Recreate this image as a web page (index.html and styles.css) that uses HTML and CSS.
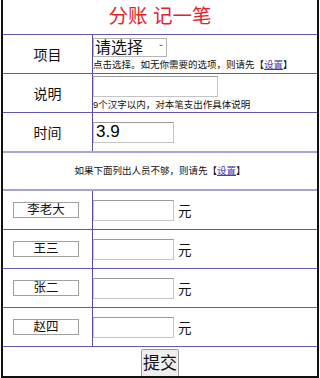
FILE: index.html
```html
<!DOCTYPE html>
<html lang="zh-CN">
<head>
  <meta charset="UTF-8">
  <meta name="viewport" content="width=device-width, initial-scale=1">
  <title>分账 记一笔</title>
  <link rel="stylesheet" href="styles.css">
</head>
<body>
  <form class="page">
    <h1 class="title">分账 记一笔</h1>

    <div class="row">
      <div class="label">项目</div>
      <div class="field">
        <span class="pick-wrap">
          <select class="pick">
            <option>请选择</option>
          </select>
        </span>
        <div class="hint">点击选择。如无你需要的选项，则请先【<a href="#">设置</a>】</div>
      </div>
    </div>

    <div class="row">
      <div class="label">说明</div>
      <div class="field">
        <input class="box wide" type="text">
        <div class="hint">9个汉字以内，对本笔支出作具体说明</div>
      </div>
    </div>

    <div class="row last">
      <div class="label">时间</div>
      <div class="field">
        <input class="box date" type="text" value="3.9">
      </div>
    </div>

    <div class="note">如果下面列出人员不够，则请先【<a href="#">设置</a>】</div>

    <div class="row person">
      <div class="label"><span class="name">李老大</span></div>
      <div class="field line"><input class="box" type="text"><span class="unit">元</span></div>
    </div>
    <div class="row person">
      <div class="label"><span class="name">王三</span></div>
      <div class="field line"><input class="box" type="text"><span class="unit">元</span></div>
    </div>
    <div class="row person">
      <div class="label"><span class="name">张二</span></div>
      <div class="field line"><input class="box" type="text"><span class="unit">元</span></div>
    </div>
    <div class="row person">
      <div class="label"><span class="name">赵四</span></div>
      <div class="field line"><input class="box" type="text"><span class="unit">元</span></div>
    </div>

    <div class="actions">
      <button class="submit" type="button">提交</button>
    </div>
  </form>
</body>
</html>
```

FILE: styles.css
```css
* {
  box-sizing: border-box;
}
html, body {
  margin: 0;
  padding: 0;
  background: #fff;
  color: #111;
  font-family: "Liberation Sans", "Noto Sans CJK SC", sans-serif;
}
.page {
  margin: 0 1px;
  height: 378px;
  border: 2px solid #111;
  border-top: none;
  overflow: hidden;
}
.title {
  margin: 0;
  height: 35px;
  border-bottom: 1px solid #6557ad;
  color: #e2232b;
  font-size: 19.5px;
  font-weight: normal;
  line-height: 33px;
  text-align: center;
}

.row {
  display: grid;
  grid-template-columns: 90px 1fr;
  height: 39px;
  border-bottom: 1px solid #6557ad;
}
.row.last {
  border-bottom: none;
  height: 38px;
}
.label {
  display: flex;
  align-items: center;
  justify-content: center;
  border-right: 1px solid #5a4c9e;
  font-size: 14px;
}
.field {
  display: flex;
  flex-direction: column;
  justify-content: center;
  align-items: flex-start;
  gap: 2px;
}
.field.line {
  flex-direction: row;
  justify-content: flex-start;
  align-items: center;
  gap: 4px;
}

/* select with a small chevron */
.pick-wrap {
  position: relative;
  display: block;
}
.pick-wrap::after {
  content: "ˇ";
  position: absolute;
  right: 4px;
  top: 6px;
  font-size: 11px;
  line-height: 11px;
  color: #333;
  pointer-events: none;
}
.pick {
  display: block;
  width: 74px;
  height: 19px;
  padding: 0 0 0 1px;
  border: 1px solid #b4b4b4;
  border-radius: 0;
  background: #fff;
  font-family: inherit;
  font-size: 16px;
  line-height: 17px;
  color: #111;
  appearance: none;
  -webkit-appearance: none;
}
.hint {
  font-size: 9.5px;
  line-height: 12px;
  white-space: nowrap;
}
.hint a, .note a {
  color: #4a3aa8;
}

.box {
  width: 81px;
  height: 21px;
  margin: 0;
  padding: 0 2px;
  border: 1px solid #c4c4c4;
  border-top-color: #9a9a9a;
  font-family: inherit;
  font-size: 13px;
}
.box.wide {
  width: 125px;
}
.box.date {
  font-size: 17px;
}

.note {
  height: 40px;
  border-top: 2px solid #aaa3d6;
  border-bottom: 2px solid #aaa3d6;
  font-size: 9.5px;
  line-height: 36px;
  text-align: center;
}

.person .label {
  justify-content: flex-start;
  padding-left: 10px;
}
.name {
  display: block;
  width: 66px;
  height: 16px;
  border: 1px solid #a0a0a0;
  font-size: 12.5px;
  line-height: 14px;
  text-align: center;
}
.unit {
  font-size: 13.5px;
}

.actions {
  display: flex;
  justify-content: center;
  padding-top: 2px;
}
.submit {
  height: 30px;
  padding: 0 1px;
  border: 1px solid #9a9a9a;
  border-radius: 2px;
  background: #efefef;
  color: #111;
  font-family: inherit;
  font-size: 17px;
  line-height: 26px;
}
```
